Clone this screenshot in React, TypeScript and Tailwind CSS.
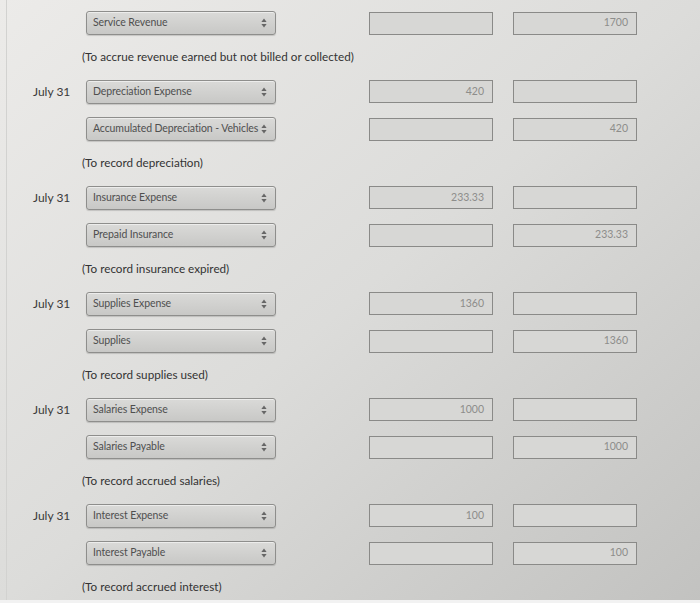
import React from "react";

type Entry = {
  debit: string;
  debitAmt: string;
  credit: string;
  creditAmt: string;
  note: string;
};

const entries: Entry[] = [
  { debit: "Depreciation Expense", debitAmt: "420", credit: "Accumulated Depreciation - Vehicles", creditAmt: "420", note: "(To record depreciation)" },
  { debit: "Insurance Expense", debitAmt: "233.33", credit: "Prepaid Insurance", creditAmt: "233.33", note: "(To record insurance expired)" },
  { debit: "Supplies Expense", debitAmt: "1360", credit: "Supplies", creditAmt: "1360", note: "(To record supplies used)" },
  { debit: "Salaries Expense", debitAmt: "1000", credit: "Salaries Payable", creditAmt: "1000", note: "(To record accrued salaries)" },
  { debit: "Interest Expense", debitAmt: "100", credit: "Interest Payable", creditAmt: "100", note: "(To record accrued interest)" },
];

function Arrows() {
  return (
    <svg width="6" height="10" viewBox="0 0 6 10" className="shrink-0">
      <path d="M3 0.5 L5.6 4 L0.4 4 Z" fill="#666666" />
      <path d="M3 9.5 L5.6 6 L0.4 6 Z" fill="#666666" />
    </svg>
  );
}

function Select({ label }: { label: string }) {
  return (
    <div className="w-[190px] h-[24px] rounded-[3px] border border-[#8e8e8c] bg-gradient-to-b from-[#dadad8] to-[#c8c8c6] shadow-[inset_0_1px_0_rgba(255,255,255,0.5),0_1px_1px_rgba(0,0,0,0.15)] flex items-center justify-between pl-[6px] pr-[8px]">
      <span className="text-[10.5px] text-[#4f4f4f] whitespace-nowrap tracking-[-0.1px]">{label}</span>
      <Arrows />
    </div>
  );
}

function Input({ value }: { value: string }) {
  return (
    <div className="w-[124px] h-[23px] border border-[#8a8a88] bg-[#d7d7d5] flex items-center justify-end pr-[8px]">
      <span className="text-[10.5px] text-[#8d8d8b]">{value}</span>
    </div>
  );
}

function Row({ h, label, account, debit, credit }: { h: string; label?: string; account: string; debit: string; credit: string }) {
  return (
    <div className={`flex items-center ${h}`}>
      <div className="w-[53px] text-[12px] text-[#3a3a3a] whitespace-nowrap">{label ?? ""}</div>
      <Select label={account} />
      <div className="ml-[93px]">
        <Input value={debit} />
      </div>
      <div className="ml-[20px]">
        <Input value={credit} />
      </div>
    </div>
  );
}

function Note({ text }: { text: string }) {
  return (
    <div className="h-[31px] flex items-center pl-[49px] text-[11.7px] text-[#333333] whitespace-nowrap">
      {text}
    </div>
  );
}

export default function App() {
  return (
    <div
      className="w-[700px] h-[603px] overflow-hidden relative bg-gradient-to-br from-[#ecebe9] via-[#dcdcda] to-[#c2c2c0]"
      style={{ fontFamily: "Lato, 'Noto Sans', sans-serif" }}
    >
      <div className="absolute left-[6px] top-0 bottom-0 w-px bg-[#d2d2d0]" />
      <div className="absolute left-0 right-0 bottom-0 h-[3px] bg-[#f2f2f2]" />
      <div className="pt-[5px] pl-[33px]">
        <Row h="h-[36px]" account="Service Revenue" debit="" credit="1700" />
        <Note text="(To accrue revenue earned but not billed or collected)" />
        {entries.map((e) => (
          <React.Fragment key={e.debit}>
            <Row h="h-[39px]" label="July 31" account={e.debit} debit={e.debitAmt} credit="" />
            <Row h="h-[36px]" account={e.credit} debit="" credit={e.creditAmt} />
            <Note text={e.note} />
          </React.Fragment>
        ))}
      </div>
    </div>
  );
}
